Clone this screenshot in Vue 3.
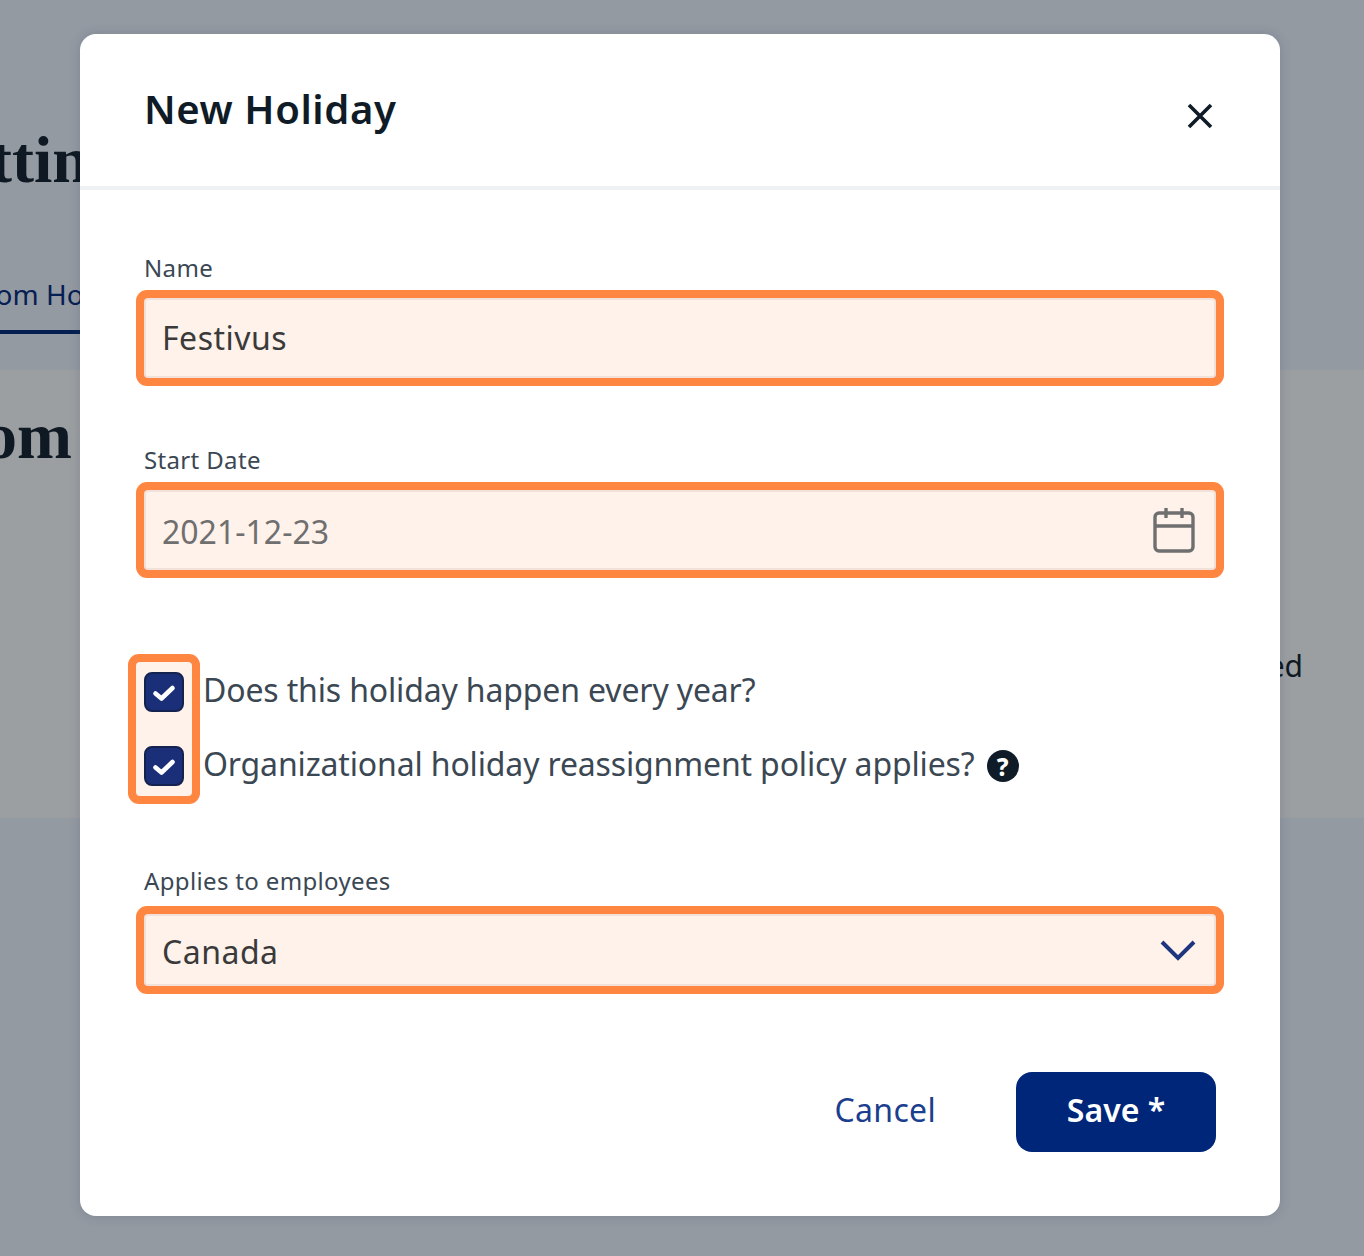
<template>
  <div class="page">
    <!-- page behind the dialog, mostly covered -->
    <h1 class="page-title">Settings</h1>
    <div class="tabs">
      <span class="tab">Custom Holidays</span>
    </div>
    <section class="panel">
      <h2 class="panel-title">Custom</h2>
      <div class="panel-row">Observed</div>
    </section>

    <div class="overlay">
      <div class="modal">
        <header class="modal-header">
          <h3>New Holiday</h3>
          <button class="close-btn" type="button" aria-label="Close">
            <svg width="32" height="32" viewBox="0 0 32 32" fill="none" stroke="#0f1c27" stroke-width="3.6">
              <path d="M5 5 L27 27 M27 5 L5 27" />
            </svg>
          </button>
        </header>

        <form class="modal-body" @submit.prevent>
          <label class="field-label" for="name">Name</label>
          <input id="name" v-model="name" class="text-input name" type="text" />

          <label class="field-label second" for="start">Start Date</label>
          <div class="input-wrap">
            <input id="start" v-model="startDate" class="text-input date" type="text" />
            <svg class="calendar" width="42" height="46" viewBox="0 0 42 46" fill="none" stroke="#6f6f70" stroke-width="3.4">
              <rect x="2" y="6" width="38" height="38" rx="4" />
              <path d="M2 19 H40 M13 1 V11 M29 1 V11" />
            </svg>
          </div>

          <div class="checks">
            <div class="check-boxes">
              <span v-for="item in checks" :key="item.text" class="check-box">
                <svg width="24" height="24" viewBox="0 0 24 24" fill="none" stroke="#fff" stroke-width="4.6" stroke-linecap="round" stroke-linejoin="round">
                  <path d="M3.5 13.5 L9.5 18.5 L20.5 8" />
                </svg>
              </span>
            </div>
            <div class="check-labels">
              <div v-for="item in checks" :key="item.text" class="check-label">
                {{ item.text }}
                <span v-if="item.help" class="help">?</span>
              </div>
            </div>
          </div>

          <label class="field-label third" for="applies">Applies to employees</label>
          <div class="input-wrap">
            <select id="applies" v-model="applies" class="text-input select">
              <option>Canada</option>
            </select>
            <svg class="chevron" width="36" height="22" viewBox="0 0 36 22" fill="none" stroke="#1e3680" stroke-width="4">
              <path d="M2 3 L18 19 L34 3" />
            </svg>
          </div>

          <footer class="modal-footer">
            <button class="cancel-btn" type="button">Cancel</button>
            <button class="save-btn" type="submit">Save *</button>
          </footer>
        </form>
      </div>
    </div>
  </div>
</template>

<script setup>
import { ref } from 'vue'

const name = ref('Festivus')
const startDate = ref('2021-12-23')
const applies = ref('Canada')

const checks = [
  { text: 'Does this holiday happen every year?', help: false },
  { text: 'Organizational holiday reassignment policy applies?', help: true }
]
</script>

<style>
html,
body {
  margin: 0;
  background: #f2f6ff;
}
</style>

<style scoped>
.page {
  position: relative;
  height: 1256px;
  overflow: hidden;
  background: #f2f6ff;
  font-family: "Noto Sans", "Open Sans", sans-serif;
  color: #0f1c27;
}

.page-title {
  margin: 0 0 0 -76px;
  padding-top: 122px;
  font-family: "Liberation Serif", serif;
  font-size: 66px;
  line-height: 76px;
  font-weight: 700;
  white-space: nowrap;
}

.tabs {
  margin-top: 76px;
  height: 56px;
  width: 300px;
  margin-left: -63px;
  border-bottom: 4px solid #00267a;
}

.tab {
  display: block;
  font-size: 28px;
  line-height: 40px;
  color: #00267a;
  white-space: nowrap;
}

.panel {
  margin-top: 36px;
  height: 448px;
  background: #fff;
}

.panel-title {
  margin: 0 0 0 -148px;
  padding-top: 28px;
  font-family: "Liberation Serif", serif;
  font-size: 66px;
  line-height: 76px;
  white-space: nowrap;
}

.panel-row {
  margin-top: 172px;
  padding-right: 61px;
  text-align: right;
  font-size: 30px;
  line-height: 40px;
  color: #0f1c27;
}

.overlay {
  position: absolute;
  inset: 0;
  background: rgba(15, 21, 29, 0.41);
}

.modal {
  width: 1200px;
  margin: 34px 0 0 80px;
  background: #fff;
  border-radius: 16px;
  box-shadow: 0 0 12px rgba(30, 45, 80, 0.18);
}

.modal-header {
  display: flex;
  justify-content: space-between;
  align-items: flex-start;
  height: 152px;
  box-sizing: content-box;
  padding: 0 64px;
  border-bottom: 4px solid #eff1f3;
}

.modal-header h3 {
  margin: 51px 0 0;
  font-size: 40px;
  line-height: 48px;
  font-weight: 600;
  letter-spacing: 0.6px;
  color: #0f1c27;
}

.close-btn {
  display: flex;
  margin-top: 66px;
  padding: 0;
  border: none;
  background: none;
  cursor: pointer;
}

.modal-body {
  display: flex;
  flex-direction: column;
  padding: 63px 64px 64px;
}

.field-label {
  margin-bottom: 15px;
  font-size: 24px;
  line-height: 30px;
  letter-spacing: 0.35px;
  color: #3b4854;
}

.field-label.second {
  margin-top: 67px;
}

.field-label.third {
  margin-top: 70px;
  margin-bottom: 18px;
}

.text-input {
  display: block;
  width: 100%;
  height: 80px;
  box-sizing: border-box;
  padding: 0 16px;
  border: 2px solid #f2e1d9;
  border-radius: 4px;
  outline: none;
  background: #fff2ea;
  box-shadow: 0 0 0 8px #ff8640;
  font-family: inherit;
  font-size: 32px;
  letter-spacing: 0.5px;
  color: #3a3a3a;
}

.text-input.name {
  padding-bottom: 2px;
}

.text-input.date {
  padding-top: 2px;
  letter-spacing: 0;
  color: #6f6f70;
}

.text-input.select {
  height: 72px;
  padding-top: 2px;
  appearance: none;
}

.input-wrap {
  position: relative;
}

.calendar {
  position: absolute;
  top: 17px;
  right: 21px;
}

.chevron {
  position: absolute;
  top: 25px;
  right: 20px;
}

.checks {
  display: flex;
  margin-top: 92px;
}

.check-boxes {
  display: flex;
  flex-direction: column;
  gap: 34px;
  margin-left: -8px;
  padding: 10px 8px;
  background: #fff2ea;
  box-shadow: 0 0 0 8px #ff8640;
  border-radius: 4px;
}

.check-box {
  display: flex;
  align-items: center;
  justify-content: center;
  width: 40px;
  height: 40px;
  box-sizing: border-box;
  border: 2px solid #14224f;
  border-radius: 8px;
  background: #1a2f78;
}

.check-labels {
  display: flex;
  flex-direction: column;
  gap: 34px;
  margin-left: 11px;
  padding-top: 7px;
}

.check-label {
  display: flex;
  align-items: center;
  gap: 12px;
  height: 40px;
  font-size: 32px;
  letter-spacing: -0.15px;
  color: #3b4854;
}

.help {
  display: flex;
  align-items: center;
  justify-content: center;
  width: 32px;
  height: 32px;
  margin-top: 6px;
  border-radius: 50%;
  background: #0f1c27;
  color: #fff;
  font-size: 24px;
  font-weight: 800;
}

.modal-footer {
  display: flex;
  justify-content: flex-end;
  align-items: center;
  gap: 80px;
  margin-top: 86px;
}

.cancel-btn {
  padding: 0 0 6px;
  border: none;
  background: none;
  font-family: inherit;
  font-size: 32px;
  letter-spacing: 0.3px;
  color: #1b3e8e;
  cursor: pointer;
}

.save-btn {
  width: 200px;
  height: 80px;
  padding: 0 0 6px;
  border: none;
  border-radius: 16px;
  background: #00267a;
  font-family: inherit;
  font-size: 32px;
  font-weight: 600;
  color: #fff;
  cursor: pointer;
}
</style>
